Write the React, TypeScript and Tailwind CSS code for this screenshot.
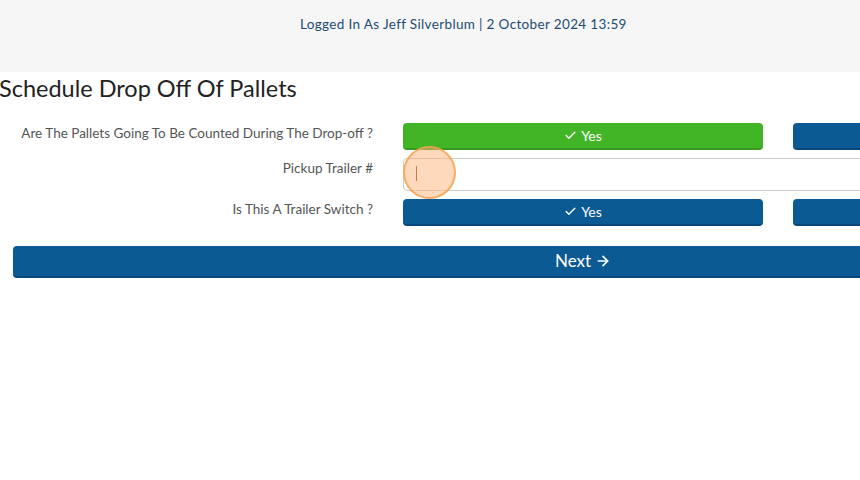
import { Check, ArrowRight } from "lucide-react";

function ChoiceButton({ label, green }: { label: string; green?: boolean }) {
  return (
    <button
      className={
        green
          ? "h-[27px] w-[360px] rounded-[4px] bg-[#42b526] border-b-2 border-[#379a1f] text-white text-[14px] flex items-center justify-center gap-1"
          : "h-[27px] w-[360px] rounded-[4px] bg-[#0b5a94] border-b-2 border-[#08487a] text-white text-[14px] flex items-center justify-center gap-1"
      }
    >
      {label && <Check size={13} strokeWidth={2.5} />}
      {label}
    </button>
  );
}

export default function App() {
  return (
    <div className="w-[860px] h-[480px] overflow-hidden bg-white font-['Lato',sans-serif]">
      <div className="h-[72px] bg-[#f6f6f6] pt-[11px] pl-[300px]">
        <span className="text-[13.5px] text-[#1d4a73] tracking-[0.35px]">
          Logged In As Jeff Silverblum | 2 October 2024 13:59
        </span>
      </div>

      <div className="w-[1166px]">
        <h1 className="text-[23.5px] text-[#222] leading-none pt-[5px] h-[51px] -ml-[1px]">
          Schedule Drop Off Of Pallets
        </h1>

        <div className="flex flex-col gap-2">
          <div className="flex items-start gap-[30px]">
            <label className="w-[373px] text-right text-[13.5px] text-[#555]">
              Are The Pallets Going To Be Counted During The Drop-off ?
            </label>
            <ChoiceButton label="Yes" green />
            <ChoiceButton label="" />
          </div>

          <div className="flex items-start gap-[30px]">
            <label className="w-[373px] text-right text-[13.5px] text-[#555]">
              Pickup Trailer #
            </label>
            <div className="relative">
              <input
                className="h-[33px] w-[750px] border border-[#ccc] rounded-[4px] outline-none px-3 text-[14px]"
                defaultValue=""
              />
              <span className="absolute left-[13px] top-[8px] w-px h-[15px] bg-[#7a4a2a]" />
              <span className="absolute left-0 top-[-12px] w-[53px] h-[53px] rounded-full bg-[#ffb37a]/50 border-2 border-[#f5a050]/80" />
            </div>
          </div>

          <div className="flex items-start gap-[30px]">
            <label className="w-[373px] text-right text-[13.5px] text-[#555]">
              Is This A Trailer Switch ?
            </label>
            <ChoiceButton label="Yes" />
            <ChoiceButton label="" />
          </div>
        </div>

        <div className="pl-[13px] pr-[13px] pt-[20px]">
          <button className="w-full h-[32px] rounded-[4px] bg-[#0b5a94] border-b-2 border-[#08487a] text-white text-[17px] flex items-center justify-center gap-1">
            Next
            <ArrowRight size={16} strokeWidth={2.5} />
          </button>
        </div>
      </div>
    </div>
  );
}
